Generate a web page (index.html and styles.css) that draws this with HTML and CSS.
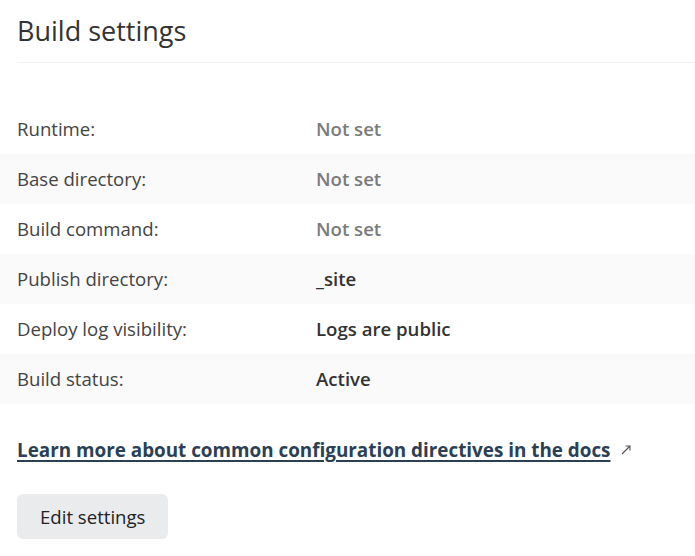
FILE: index.html
```html
<!DOCTYPE html>
<html>
<head>
<meta charset="utf-8">
<link rel="stylesheet" href="styles.css">
</head>
<body>
<div class="page">
  <header class="head">
    <h1 class="title">Build settings</h1>
  </header>
  <dl class="rows">
    <div class="row"><dt>Runtime:</dt><dd class="muted">Not set</dd></div>
    <div class="row alt"><dt>Base directory:</dt><dd class="muted">Not set</dd></div>
    <div class="row"><dt>Build command:</dt><dd class="muted">Not set</dd></div>
    <div class="row alt"><dt>Publish directory:</dt><dd>_site</dd></div>
    <div class="row"><dt>Deploy log visibility:</dt><dd>Logs are public</dd></div>
    <div class="row alt"><dt>Build status:</dt><dd>Active</dd></div>
  </dl>
  <p class="more"><a class="link" href="#">Learn more about common configuration directives in the docs</a><svg class="ext" width="12" height="12" viewBox="0 0 12 12"><path d="M2 10 L10 2 M5.5 2 H10 V6.5" fill="none" stroke="#555" stroke-width="1.1"/></svg></p>
  <button class="btn">Edit settings</button>
</div>
</body>
</html>
```
FILE: styles.css
```css
* { box-sizing: border-box; }
body {
  margin: 0;
  background: #fff;
  font-family: "Open Sans", "Noto Sans", sans-serif;
  color: #333;
}
.page { padding-left: 17px; }
.head {
  border-bottom: 1px solid #f3f3f3;
  padding-top: 13px;
  height: 63px;
}
.title {
  margin: 0;
  font-size: 27px;
  font-weight: 400;
  line-height: 36px;
  color: #333;
}
.rows {
  margin: 41px 0 0 -17px;
}
.row {
  display: flex;
  align-items: center;
  height: 50px;
  padding-left: 17px;
  padding-bottom: 1px;
  font-size: 18.6px;
}
.row.alt { background: #fafafa; }
.row dt {
  width: 299px;
  color: #444;
}
.row dd {
  margin: 0;
  font-weight: 600;
  color: #333;
}
.row dd.muted { color: #7b7b7b; }
.more {
  margin: 33px 0 0;
  display: flex;
  align-items: center;
  gap: 9px;
  font-size: 18.85px;
}
.link {
  color: #2b3f55;
  font-weight: 700;
  text-decoration: underline;
  text-underline-offset: 3px;
  text-decoration-thickness: 2px;
}
.btn {
  margin-top: 31px;
  height: 45px;
  padding: 0 23px;
  border: 0;
  border-radius: 6px;
  background: #e9ebed;
  font-family: inherit;
  font-size: 18.6px;
  color: #222;
}
```
